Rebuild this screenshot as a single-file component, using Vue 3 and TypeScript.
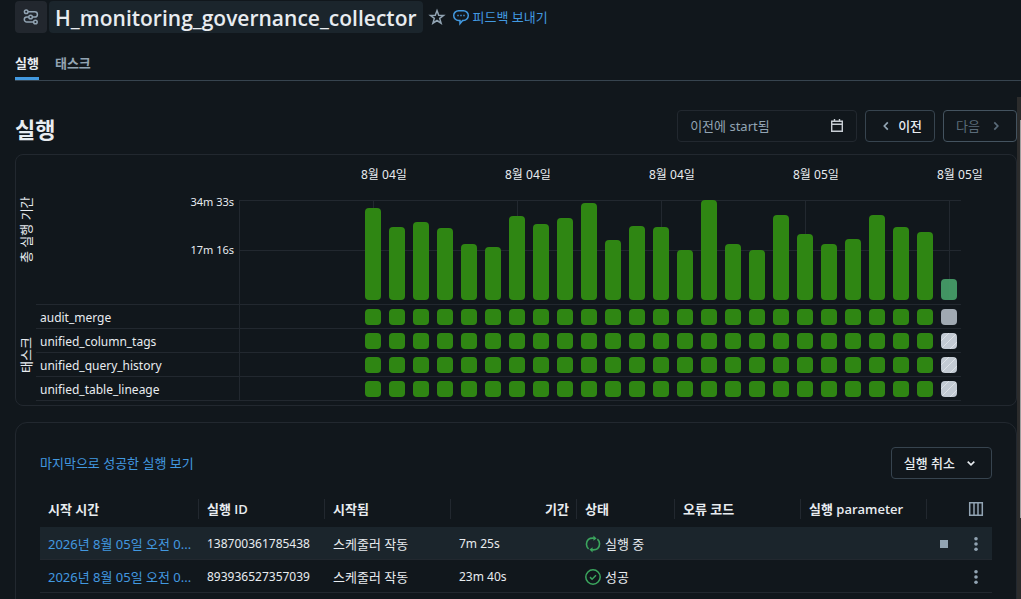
<script setup lang="ts">
interface Run {
  start: string
  id: string
  launched: string
  duration: string
  status: string
  running: boolean
}

const barHeights: number[] = [
  92, 73, 78, 72, 56, 53, 84, 76, 82, 97, 60, 74, 73, 50, 100, 56, 50, 85, 66, 56, 61, 85, 73, 68, 21,
]
const lastIndex = barHeights.length - 1

const dates: string[] = ['8월 04일', '8월 04일', '8월 04일', '8월 05일', '8월 05일']

const tasks = [
  { name: 'audit_merge', last: 'active' },
  { name: 'unified_column_tags', last: 'pending' },
  { name: 'unified_query_history', last: 'pending' },
  { name: 'unified_table_lineage', last: 'pending' },
]

const runs: Run[] = [
  { start: '2026년 8월 05일 오전 0...', id: '138700361785438', launched: '스케줄러 작동', duration: '7m 25s', status: '실행 중', running: true },
  { start: '2026년 8월 05일 오전 0...', id: '893936527357039', launched: '스케줄러 작동', duration: '23m 40s', status: '성공', running: false },
]
</script>

<template>
  <div class="page">
    <header class="header">
      <span class="job-icon">
        <svg width="16" height="16" viewBox="0 0 16 16" fill="none" stroke="currentColor" stroke-width="1.5">
          <circle cx="3.2" cy="2.8" r="1.8" />
          <circle cx="7.6" cy="8" r="1.8" />
          <circle cx="12.4" cy="13" r="1.8" />
          <path d="M5 2.8h6.8a2.6 2.6 0 0 1 0 5.2H9.4M5.8 8H3.8a2.5 2.5 0 0 0 0 5h6.8" />
        </svg>
      </span>
      <h1 class="title">H_monitoring_governance_collector</h1>
      <button class="icon-button star" type="button" aria-label="즐겨찾기">
        <svg width="16" height="16" viewBox="0 0 16 16" fill="none" stroke="currentColor" stroke-width="1.5">
          <path d="M8 1.6l1.7 4.6 4.9.2-3.9 3 1.4 4.8L8 11.5l-4.1 2.7 1.4-4.8-3.9-3 4.9-.2z" />
        </svg>
      </button>
      <a class="link feedback" href="#">
        <svg width="16" height="16" viewBox="0 0 16 16" fill="none" stroke="currentColor" stroke-width="1.5">
          <path d="M5.6 1.7h4.8a4.9 4.9 0 0 1 0 9.8H9.6L7 14.6v-3.1H5.6a4.9 4.9 0 0 1 0-9.8z" />
          <path d="M4.3 6.6h1.4M7.3 6.6h1.4M10.3 6.6h1.4" />
        </svg>
        <span>피드백 보내기</span>
      </a>
    </header>

    <nav class="tabs">
      <button class="tab selected" type="button">실행</button>
      <button class="tab" type="button">태스크</button>
    </nav>

    <div class="body">
      <main class="content">
        <div class="toolbar">
          <h2 class="heading">실행</h2>
          <label class="date-field">
            <input type="text" placeholder="이전에 start됨" aria-label="이전에 start됨" />
            <svg width="16" height="16" viewBox="0 0 16 16" fill="none" stroke="currentColor" stroke-width="1.4">
              <path d="M2.7 3.2h10.6v10H2.7zM2.7 6.2h10.6M5.5 1v2.6M10.5 1v2.6" />
            </svg>
          </label>
          <button class="button prev" type="button">
            <svg width="16" height="16" viewBox="0 0 16 16" fill="none" stroke="currentColor" stroke-width="1.7">
              <path d="M9.8 4.3L6.3 8l3.5 3.7" />
            </svg>
            <span>이전</span>
          </button>
          <button class="button next" type="button" disabled>
            <span>다음</span>
            <svg width="16" height="16" viewBox="0 0 16 16" fill="none" stroke="currentColor" stroke-width="1.7">
              <path d="M6.3 4.3L9.8 8l-3.5 3.7" />
            </svg>
          </button>
        </div>

        <section class="card chart">
          <div class="side">
            <span class="side-label total">총 실행 기간</span>
            <span class="side-label">태스크</span>
          </div>
          <div class="matrix">
            <div class="dates">
              <span v-for="(date, i) in dates" :key="i" class="date">{{ date }}</span>
            </div>
            <div class="line durations">
              <div class="scale">
                <span>34m 33s</span>
                <span>17m 16s</span>
              </div>
              <div class="plot grid-lines">
                <div class="series bars">
                  <div v-for="(height, i) in barHeights" :key="i" class="slot" :class="{ tick: i % 6 === 0 }">
                    <div class="bar" :class="{ running: i === lastIndex }" :style="{ height: height + '%' }"></div>
                  </div>
                </div>
              </div>
            </div>
            <div v-for="task in tasks" :key="task.name" class="line task">
              <div class="task-name">{{ task.name }}</div>
              <div class="plot">
                <div class="series">
                  <div v-for="(height, i) in barHeights" :key="i" class="slot">
                    <div class="tile" :class="i === lastIndex ? task.last : ''"></div>
                  </div>
                </div>
              </div>
            </div>
          </div>
        </section>

        <section class="card list">
          <div class="list-head">
            <a class="link" href="#">마지막으로 성공한 실행 보기</a>
            <button class="button cancel" type="button">
              <span>실행 취소</span>
              <svg width="16" height="16" viewBox="0 0 16 16" fill="none" stroke="currentColor" stroke-width="1.6">
                <path d="M4.7 6.6L8 9.8l3.3-3.2" />
              </svg>
            </button>
          </div>
          <table class="runs">
            <colgroup>
              <col class="c-start" />
              <col class="c-mid" />
              <col class="c-mid" />
              <col class="c-mid" />
              <col class="c-status" />
              <col class="c-mid" />
              <col />
              <col class="c-actions" />
            </colgroup>
            <thead>
              <tr>
                <th>시작 시간</th>
                <th>실행 ID</th>
                <th>시작됨</th>
                <th class="right">기간</th>
                <th>상태</th>
                <th>오류 코드</th>
                <th>실행 parameter</th>
                <th class="last">
                  <div class="actions">
                    <button class="icon-button" type="button" aria-label="열">
                      <svg width="16" height="16" viewBox="0 0 16 16" fill="none" stroke="currentColor" stroke-width="1.5">
                        <path d="M1.7 1.7h12.6v12.6H1.7zM6 1.7v12.6M10 1.7v12.6" />
                      </svg>
                    </button>
                  </div>
                </th>
              </tr>
            </thead>
            <tbody>
              <tr v-for="run in runs" :key="run.id" :class="{ active: run.running }">
                <td><a class="link" href="#">{{ run.start }}</a></td>
                <td class="latin">{{ run.id }}</td>
                <td>{{ run.launched }}</td>
                <td class="latin">{{ run.duration }}</td>
                <td>
                  <div class="status">
                    <svg v-if="run.running" width="16" height="16" viewBox="0 0 16 16" fill="none" stroke="currentColor" stroke-width="1.6">
                      <path d="M3.6 12.9A6.5 6.5 0 0 1 3.4 3.4Q5.2 1.9 9 2.2M12.4 3.1A6.5 6.5 0 0 1 12.6 12.6Q10.8 14.1 7 13.8" />
                      <path d="M8.4 -.4l3.2 2.8-3.2 2.4zM7.6 16.4l-3.2-2.8 3.2-2.4z" fill="currentColor" stroke="none" />
                    </svg>
                    <svg v-else width="16" height="16" viewBox="0 0 16 16" fill="none" stroke="currentColor" stroke-width="1.5">
                      <circle cx="8" cy="8" r="7.2" />
                      <path d="M5 8.1l2.1 2.1 3.9-3.9" />
                    </svg>
                    <span>{{ run.status }}</span>
                  </div>
                </td>
                <td></td>
                <td></td>
                <td>
                  <div class="actions">
                    <button v-if="run.running" class="icon-button" type="button" aria-label="중지">
                      <svg width="16" height="16" viewBox="0 0 16 16" fill="currentColor"><path d="M4 4h8v8H4z" /></svg>
                    </button>
                    <button class="icon-button" type="button" aria-label="더 보기">
                      <svg width="16" height="16" viewBox="0 0 16 16" fill="currentColor">
                        <circle cx="8" cy="2.7" r="1.8" />
                        <circle cx="8" cy="8" r="1.8" />
                        <circle cx="8" cy="13.3" r="1.8" />
                      </svg>
                    </button>
                  </div>
                </td>
              </tr>
            </tbody>
          </table>
        </section>
      </main>
      <div class="scroll-track"><div class="scroll-thumb"></div></div>
    </div>
  </div>
</template>

<style>
body {
  background: #11171c;
}
</style>

<style scoped>
.page {
  --line: #22282f;
  --border: #37444f;
  --text: #e8ecf0;
  --muted: #92a4b3;
  --blue: #4299e0;
  display: flex;
  flex-direction: column;
  box-sizing: border-box;
  height: 100vh;
  padding-top: 1px;
  overflow: hidden;
  color: var(--text);
  font-family: 'Noto Sans', 'Noto Sans CJK KR', sans-serif;
  font-size: 13px;
  line-height: 20px;
}
svg {
  display: block;
  flex: none;
  overflow: visible;
}
button,
input {
  font: inherit;
  color: inherit;
}
.link {
  color: var(--blue);
  text-decoration: none;
}
.icon-button {
  padding: 0;
  border: 0;
  background: none;
  color: var(--muted);
}
.header {
  display: flex;
  align-items: center;
  height: 32px;
  padding-left: 15px;
}
.job-icon {
  display: grid;
  place-items: center;
  width: 32px;
  height: 32px;
  margin-right: 2px;
  border-radius: 4px;
  background: #22272e;
  color: var(--muted);
}
.title {
  box-sizing: border-box;
  height: 32px;
  margin: 0;
  padding: 0 6px;
  border-radius: 4px;
  background: #1b252c;
  font-family: 'Open Sans', 'Noto Sans CJK KR', sans-serif;
  font-size: 21px;
  font-weight: 600;
  line-height: 34px;
}
.star {
  margin: 0 8px 0 6px;
}
.feedback {
  display: flex;
  align-items: center;
  gap: 4px;
}
.tabs {
  display: flex;
  gap: 16px;
  flex: none;
  height: 47px;
  margin-left: 15px;
  border-bottom: 1px solid var(--border);
}
.tab {
  padding: 16px 0 0;
  border: 0;
  border-bottom: 3px solid transparent;
  background: none;
  color: var(--muted);
  font-weight: 600;
}
.tab.selected {
  border-bottom-color: var(--blue);
  color: var(--text);
}
.body {
  display: flex;
  flex: 1;
  min-height: 0;
  margin-top: 16px;
}
.content {
  flex: 1;
  min-width: 0;
  padding: 13px 0 0 15px;
}
.toolbar {
  display: flex;
  gap: 8px;
  height: 32px;
  margin-bottom: 12px;
}
.heading {
  margin: 0 auto 0 0;
  font-size: 22px;
  font-weight: 600;
  line-height: 38px;
}
.date-field {
  display: flex;
  align-items: center;
  box-sizing: border-box;
  width: 180px;
  padding: 0 11px 0 12px;
  border: 1px solid var(--line);
  border-radius: 4px;
}
.date-field svg {
  color: #c8ced4;
}
.date-field input {
  flex: 1;
  min-width: 0;
  padding: 0;
  border: 0;
  outline: 0;
  background: none;
}
.date-field input::placeholder {
  color: var(--muted);
  opacity: 1;
}
.button {
  display: flex;
  align-items: center;
  gap: 8px;
  box-sizing: border-box;
  height: 32px;
  padding: 0 12px;
  border: 1px solid var(--border);
  border-radius: 4px;
  background: none;
  font-weight: 500;
}
.prev {
  gap: 4px;
}
.prev svg {
  color: var(--muted);
}
.next {
  border-color: #44535f;
  color: #5a6b79;
  font-weight: 400;
}
.card {
  border: 1px solid var(--line);
  border-radius: 8px;
}
.chart {
  display: flex;
}
.side {
  display: flex;
  flex-direction: column;
  flex: none;
  width: 20px;
}
.side-label {
  flex: 1;
  line-height: 20px;
  text-align: center;
  writing-mode: vertical-rl;
  text-orientation: sideways;
  transform: rotate(180deg);
}
.side-label.total {
  flex: none;
  height: 150px;
}
.matrix {
  flex: 1;
  min-width: 0;
  padding: 0 55px 4px 0;
}
.dates {
  display: flex;
  box-sizing: border-box;
  width: 600px;
  height: 45px;
  margin-left: auto;
  padding-top: 10px;
  font-size: 12px;
}
.date {
  flex: none;
  width: 144px;
  white-space: nowrap;
}
.line {
  display: flex;
}
.scale {
  display: flex;
  flex-direction: column;
  gap: 32px;
  flex: none;
  box-sizing: border-box;
  width: 203px;
  margin-top: -6px;
  padding-right: 5px;
  font-size: 11px;
  line-height: 16px;
  text-align: right;
}
.plot {
  display: flex;
  justify-content: flex-end;
  flex: 1;
  border-left: 1px solid var(--line);
}
.grid-lines {
  height: 104px;
  background:
    linear-gradient(var(--line), var(--line)) 0 0 / 100% 1px no-repeat,
    linear-gradient(var(--line), var(--line)) 0 50px / 100% 1px no-repeat;
}
.series {
  display: flex;
  width: 600px;
}
.bars {
  height: 100px;
}
.slot {
  display: flex;
  align-items: flex-end;
  justify-content: center;
  flex: 1;
}
.tick {
  background: linear-gradient(var(--line), var(--line)) 12px 0 / 1px 100% no-repeat;
}
.bar {
  width: 16px;
  border-radius: 4px;
  background: #2f8613;
}
.bar.running {
  background: rgba(70, 160, 105, 0.92);
}
.task {
  height: 23px;
  border-top: 1px solid var(--line);
}
.task:last-child {
  border-bottom: 1px solid var(--line);
}
.task-name {
  flex: none;
  box-sizing: border-box;
  width: 203px;
  padding: 3px 0 0 4px;
  font-size: 12px;
}
.tile {
  width: 16px;
  height: 16px;
  margin-bottom: 3px;
  border-radius: 4px;
  background: #2f8613;
}
.tile.active {
  background: #a0a9b2;
}
.tile.pending {
  background: repeating-linear-gradient(135deg, #c3cbd4 0 5px, #dde2e7 5px 6px);
}
.list {
  height: 100%;
  margin-top: 16px;
  padding: 24px;
  border-radius: 12px;
}
.list-head {
  display: flex;
  align-items: center;
  justify-content: space-between;
  margin-bottom: 12px;
}
.runs {
  width: 100%;
  border-collapse: separate;
  border-spacing: 0;
  table-layout: fixed;
}
.c-start {
  width: 159px;
}
.c-mid {
  width: 126px;
}
.c-status {
  width: 98px;
}
.c-actions {
  width: 65px;
}
.runs th {
  height: 36px;
  padding: 0 8px;
  background: linear-gradient(var(--line), var(--line)) right center / 1px 20px no-repeat;
  font-family: 'Open Sans', 'Noto Sans CJK KR', sans-serif;
  font-weight: 600;
  text-align: left;
  white-space: nowrap;
}
.runs th.right {
  text-align: right;
}
.runs th.last {
  background: none;
}
.runs td {
  height: 30px;
  padding: 2px 8px 0;
  border-bottom: 1px solid var(--line);
  white-space: nowrap;
}
.runs .latin {
  font-size: 12px;
}
.active td {
  background: #1b252c;
}
.status {
  display: flex;
  align-items: center;
  gap: 4px;
}
.status svg {
  color: #3ba65e;
}
.actions {
  display: flex;
  justify-content: flex-end;
  gap: 16px;
}
.scroll-track {
  flex: none;
  width: 4px;
  background: #2c2c2c;
}
.scroll-thumb {
  width: 1px;
  height: 398px;
  margin: 23px 0 0 auto;
  background: #9f9f9f;
}
</style>
